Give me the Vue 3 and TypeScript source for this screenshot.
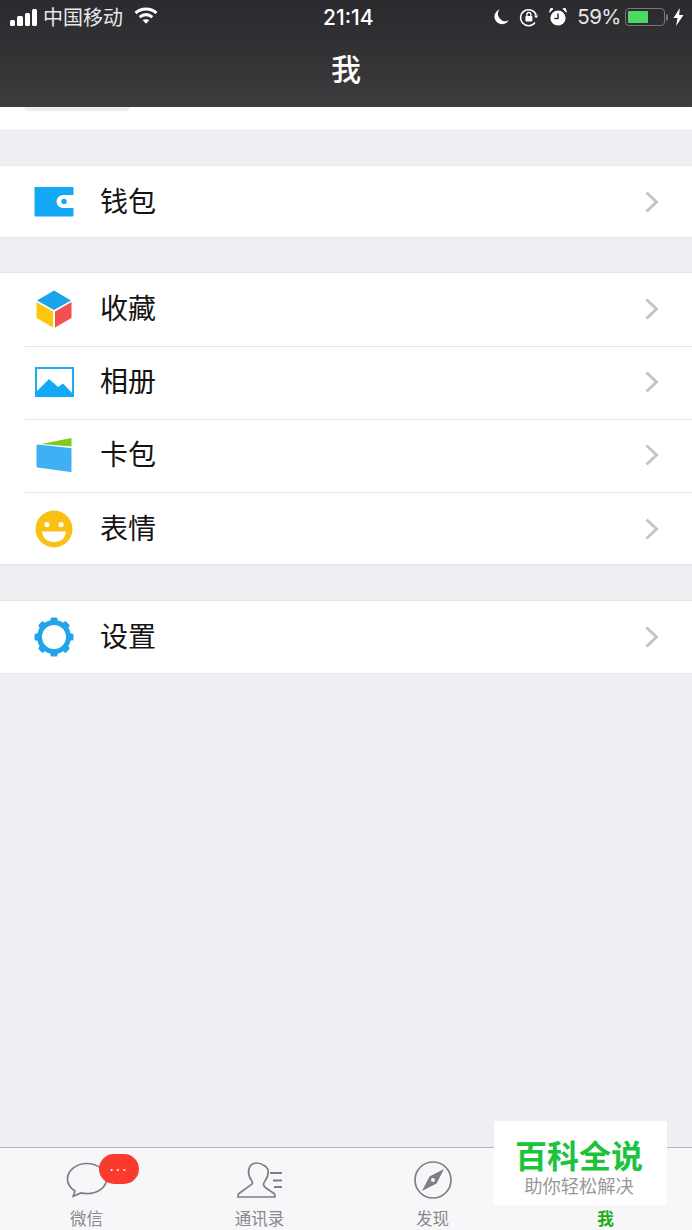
<template>
  <div class="page">
    <header class="nav">
      <div class="status">
        <div class="status-left">
          <div class="signal"><i v-for="h in [6, 10, 13, 17]" :key="h" :style="{ height: h + 'px' }"></i></div>
          <span class="carrier">中国移动</span>
          <svg class="wifi" width="24" height="17" viewBox="0 0 24 17" fill="none" stroke="#fff" stroke-width="3">
            <path d="M1.500 6C7.500.8 16.500.8 22.500 6" />
            <path d="M5.600 10.200c4-3.200 8.800-3.200 12.800 0" />
            <path d="M12 16.800l-3.400-3.700c2-1.200 4.800-1.200 6.800 0z" fill="#fff" stroke="none" />
          </svg>
        </div>
        <span class="time">21:14</span>
        <div class="status-right">
          <svg width="17" height="18" viewBox="0 0 18 18"><path d="M7 1a8 8 0 1 0 9.600 11.400A7.600 7.600 0 0 1 7 1z" fill="#fff" /></svg>
          <svg class="lock" width="20" height="20" viewBox="0 0 20 20" fill="none" stroke="#fff" stroke-width="1.500">
            <path d="M17.200 8.200A8 8 0 1 0 16 15.500" />
            <path d="M14.800 8.600h4.600l-2.300 2.600z" fill="#fff" stroke="none" />
            <rect x="6.400" y="9" width="7" height="5.400" rx="1" fill="#fff" stroke="none" />
            <path d="M7.900 9V7.500a2 2 0 0 1 4 0V9" stroke-width="1.300" />
          </svg>
          <svg class="alarm" width="20" height="20" viewBox="0 0 20 20">
            <circle cx="10" cy="11" r="7.600" fill="#fff" />
            <path d="M1.600 5.200L5 1.800 2.600 1.600zM18.400 5.200L15 1.800l2.400-.2z" fill="#fff" stroke="#fff" />
            <path d="M10 6.400V11.400H6.200" fill="none" stroke="#333336" stroke-width="1.500" />
          </svg>
          <span class="percent">59%</span>
          <div class="battery"><div class="battery-fill"></div></div>
          <i class="battery-cap"></i>
          <svg class="bolt" width="11" height="18" viewBox="0 0 10 18"><path d="M6.400 0L0 10h4l-1.400 8L10 7H5.600z" fill="#fff" /></svg>
        </div>
      </div>
      <h1 class="title">我</h1>
    </header>

    <div class="profile-end"><div class="profile-chip"></div></div>

    <section v-for="(group, g) in groups" :key="g" class="group">
      <div v-for="item in group" :key="item.label" class="row">
        <div class="row-icon">
          <svg v-if="item.icon === 'wallet'" width="40" height="32" viewBox="0 0 40 32">
            <path d="M1.500 1h37a1 1 0 0 1 1 1v7H29a6.500 6.500 0 0 0 0 13h10.500v7.500a1 1 0 0 1-1 1h-37a1 1 0 0 1-1-1V2a1 1 0 0 1 1-1z" fill="#14a9f4" />
            <circle cx="30" cy="15.500" r="2.700" fill="#14a9f4" />
          </svg>
          <svg v-else-if="item.icon === 'cube'" width="36" height="38" viewBox="0 0 36 38">
            <path d="M18 0.500L35 10.500 18 20 1 10.500z" fill="#1ba4ea" />
            <path d="M0.500 12L17 21.500V37.500L0.500 28z" fill="#fcc70f" />
            <path d="M35.500 12L19 21.500V37.500L35.500 28z" fill="#f4504f" />
          </svg>
          <svg v-else-if="item.icon === 'photo'" width="39" height="30" viewBox="0 0 39 30">
            <rect x="1" y="1" width="37" height="28" fill="#fff" stroke="#22aaf0" stroke-width="2" />
            <path d="M1 25L14 12 23 20 28 16.500 38 27V30H1z" fill="#14a9f4" />
          </svg>
          <svg v-else-if="item.icon === 'card'" width="38" height="36" viewBox="0 0 38 36">
            <path d="M6 7L36.500 1V9.500z" fill="#7ecb1c" />
            <path d="M2.500 7.500L35.500 11a1 1 0 0 1 1 1V34.500a.8.800 0 0 1-1 .6L2.500 30.500a1 1 0 0 1-1-1V8.500a1 1 0 0 1 1-1z" fill="#3fb0f6" />
          </svg>
          <svg v-else-if="item.icon === 'smile'" width="38" height="38" viewBox="0 0 38 38">
            <circle cx="19" cy="19" r="18.500" fill="#f8c114" />
            <circle cx="12" cy="14.500" r="2.600" fill="#fff" />
            <circle cx="26" cy="14.500" r="2.600" fill="#fff" />
            <path d="M7 21.500h24c-.6 7-5.800 10.500-12 10.500S7.600 28.500 7 21.500z" fill="#fff" />
          </svg>
          <svg v-else width="40" height="40" viewBox="0 0 40 40">
            <circle cx="20" cy="20" r="14.500" fill="none" stroke="#22a5e8" stroke-width="5" />
            <g fill="#22a5e8">
              <rect v-for="a in [0, 45, 90, 135, 180, 225, 270, 315]" :key="a" x="16.500" y="0.500" width="7" height="5" rx="1.500" :transform="`rotate(${a} 20 20)`" />
            </g>
          </svg>
        </div>
        <div class="row-body">
          <span class="row-label">{{ item.label }}</span>
          <svg class="chevron" width="14" height="22" viewBox="0 0 14 22" fill="none" stroke="#c4c4c8" stroke-width="3"><path d="M1.500 1.500L11.500 11 1.500 20.500" /></svg>
        </div>
      </div>
    </section>

    <div class="spacer"></div>

    <nav class="tabbar">
      <div class="tab">
        <div class="tab-icon">
          <svg width="42" height="36" viewBox="0 0 42 36" fill="none" stroke="#7f7f83" stroke-width="1.700">
            <path d="M21 1.500C10 1.500 1.500 8.500 1.500 17c0 5 3 9.300 7.500 12l-1.800 5.200 7.800-3.300c1.900.5 3.800.7 6 .7 11 0 19.500-6.500 19.500-14.600S32 1.500 21 1.500z" />
          </svg>
          <div class="badge">···</div>
        </div>
        <span class="tab-label">微信</span>
      </div>
      <div class="tab">
        <div class="tab-icon">
          <svg width="46" height="36" viewBox="0 0 46 36" fill="none" stroke="#7f7f83" stroke-width="1.700">
            <path d="M19.500 1c-5 0-8 4-8 8.500 0 4 1.300 7 3.300 9.500.8 1 .8 2.500-.3 3.400L2 31.500c-.7.600-1 1.300-1 3.500h37c0-2.200-.4-3-1-3.500l-8-5.500c-2.500-1.700-3.500-4-1-7 2-2.500 3.200-5.500 3.200-9.500C31.200 5 24.500 1 19.500 1z" />
            <path d="M33 11h12M36 18.500h9M37 25h8" stroke-width="2.200" />
          </svg>
        </div>
        <span class="tab-label">通讯录</span>
      </div>
      <div class="tab">
        <div class="tab-icon">
          <svg width="38" height="38" viewBox="0 0 38 38">
            <circle cx="19" cy="19" r="18" fill="none" stroke="#7f7f83" stroke-width="1.700" />
            <path d="M30 8L22.500 22.500 8 30l7.500-14.500z" fill="#7f7f83" />
            <circle cx="19" cy="19" r="2" fill="#f7f7fa" />
          </svg>
        </div>
        <span class="tab-label">发现</span>
      </div>
      <div class="tab">
        <div class="tab-icon"></div>
        <span class="tab-label active">我</span>
      </div>
    </nav>

    <div class="watermark">
      <span class="wm-title">百科全说</span>
      <span class="wm-sub">助你轻松解决</span>
    </div>
  </div>
</template>

<script setup lang="ts">
interface Item {
  label: string
  icon: string
}

const groups: Item[][] = [
  [{ label: '钱包', icon: 'wallet' }],
  [
    { label: '收藏', icon: 'cube' },
    { label: '相册', icon: 'photo' },
    { label: '卡包', icon: 'card' },
    { label: '表情', icon: 'smile' }
  ],
  [{ label: '设置', icon: 'gear' }]
]
</script>

<style>
html,
body {
  margin: 0;
  background: #eeeef3;
}
</style>

<style scoped>
.page {
  position: relative;
  width: 692px;
  height: 1230px;
  display: flex;
  flex-direction: column;
  overflow: hidden;
  background: #eeeef3;
  font-family: "Noto Sans CJK SC", "Liberation Sans", sans-serif;
}

.nav {
  height: 107px;
  flex: none;
  background: linear-gradient(180deg, #2b2b2f 0%, #343437 60%, #3d3d40 100%);
  color: #fff;
}

.status {
  height: 34px;
  display: flex;
  align-items: center;
  position: relative;
  padding: 0 8px 0 10px;
}

.status-left {
  display: flex;
  align-items: center;
}

.signal {
  display: flex;
  align-items: flex-end;
  gap: 2px;
  height: 17px;
  width: 27px;
}

.signal i {
  width: 5.250px;
  background: #fff;
  border-radius: 1.500px;
}

.carrier {
  margin-left: 6px;
  font-size: 20px;
  line-height: 34px;
  color: #e8e8ea;
}

.wifi {
  margin-left: 11px;
  margin-top: -3px;
}

.time {
  position: absolute;
  left: 323px;
  top: 1px;
  font: 500 21px/34px Inter, "Liberation Sans", sans-serif;
}

.status-right {
  margin-left: auto;
  display: flex;
  align-items: center;
  height: 34px;
}

.lock {
  margin-left: 9px;
}

.alarm {
  margin-left: 9px;
}

.percent {
  margin-left: 9px;
  font: 400 20.500px/34px Inter, "Liberation Sans", sans-serif;
  color: #e8e8ea;
  letter-spacing: -0.500px;
}

.battery {
  margin-left: 4px;
  width: 40px;
  height: 18px;
  box-sizing: border-box;
  border: 1.500px solid #77777b;
  border-radius: 4px;
  padding: 2px;
}

.battery-fill {
  width: 58%;
  height: 100%;
  background: #4cd964;
  border-radius: 1px;
}

.battery-cap {
  display: block;
  width: 2px;
  height: 7px;
  margin-left: 1px;
  background: #77777b;
  border-radius: 0 2px 2px 0;
}

.bolt {
  margin-left: 5px;
}

.title {
  margin: 13px 0 0;
  text-align: center;
  font-size: 30px;
  font-weight: 500;
  line-height: 40px;
  color: #fff;
}

.profile-end {
  height: 23px;
  flex: none;
  background: #fff;
  border-bottom: 1px solid #e5e5e8;
  padding-left: 24px;
}

.profile-chip {
  width: 106px;
  height: 4px;
  background: #ededed;
  border-radius: 0 0 4px 4px;
}

.group {
  flex: none;
  margin-top: 34px;
  background: #fff;
  box-shadow: inset 0 1px #e6e6e9, inset 0 -1px #e6e6e9;
}

.group:last-of-type {
  margin-top: 35px;
}

.row {
  height: 73.250px;
  display: flex;
  align-items: center;
  padding-left: 25px;
}

.row-icon {
  width: 60px;
  flex: none;
  margin-left: -1px;
  display: flex;
  justify-content: center;
}

.row-body {
  flex: 1;
  height: 100%;
  display: flex;
  align-items: center;
  justify-content: space-between;
  padding: 0 33px 0 16px;
}

.row + .row {
  position: relative;
}

.row + .row::before {
  content: "";
  position: absolute;
  left: 25px;
  right: 0;
  top: 0;
  height: 1px;
  background: #e6e6e9;
}

.row-label {
  font-size: 28px;
  line-height: 40px;
  margin-bottom: 4px;
  color: #141414;
}

.spacer {
  flex: 1;
}

.tabbar {
  flex: none;
  height: 83px;
  box-sizing: border-box;
  display: grid;
  grid-template-columns: repeat(4, 1fr);
  background: #f7f7fa;
  border-top: 1px solid #b8b8bc;
}

.tab {
  display: flex;
  flex-direction: column;
  align-items: center;
}

.tab-icon {
  position: relative;
  height: 40px;
  margin-top: 12px;
  display: flex;
  align-items: center;
  justify-content: center;
}

.tab-label {
  font-size: 16.500px;
  line-height: 22px;
  margin-top: 7px;
  color: #88888c;
}

.tab-label.active {
  color: #1aad19;
  font-weight: 700;
}

.badge {
  position: absolute;
  left: 33px;
  top: -6px;
  width: 40px;
  height: 30px;
  border-radius: 15px;
  background: #fa3a2c;
  color: #fff;
  font-size: 16px;
  line-height: 32px;
  letter-spacing: 1px;
  text-align: center;
  font-family: "Liberation Sans", sans-serif;
}

.watermark {
  position: absolute;
  left: 494px;
  top: 1121px;
  width: 173px;
  height: 84px;
  box-sizing: border-box;
  padding-right: 3px;
  background: #fff;
  display: flex;
  flex-direction: column;
  align-items: center;
}

.wm-title {
  font-size: 32px;
  font-weight: 700;
  line-height: 36px;
  margin-top: 15px;
  color: #1cc33c;
}

.wm-sub {
  font-size: 18.300px;
  line-height: 22px;
  margin-top: 2px;
  color: #98989a;
}
</style>
